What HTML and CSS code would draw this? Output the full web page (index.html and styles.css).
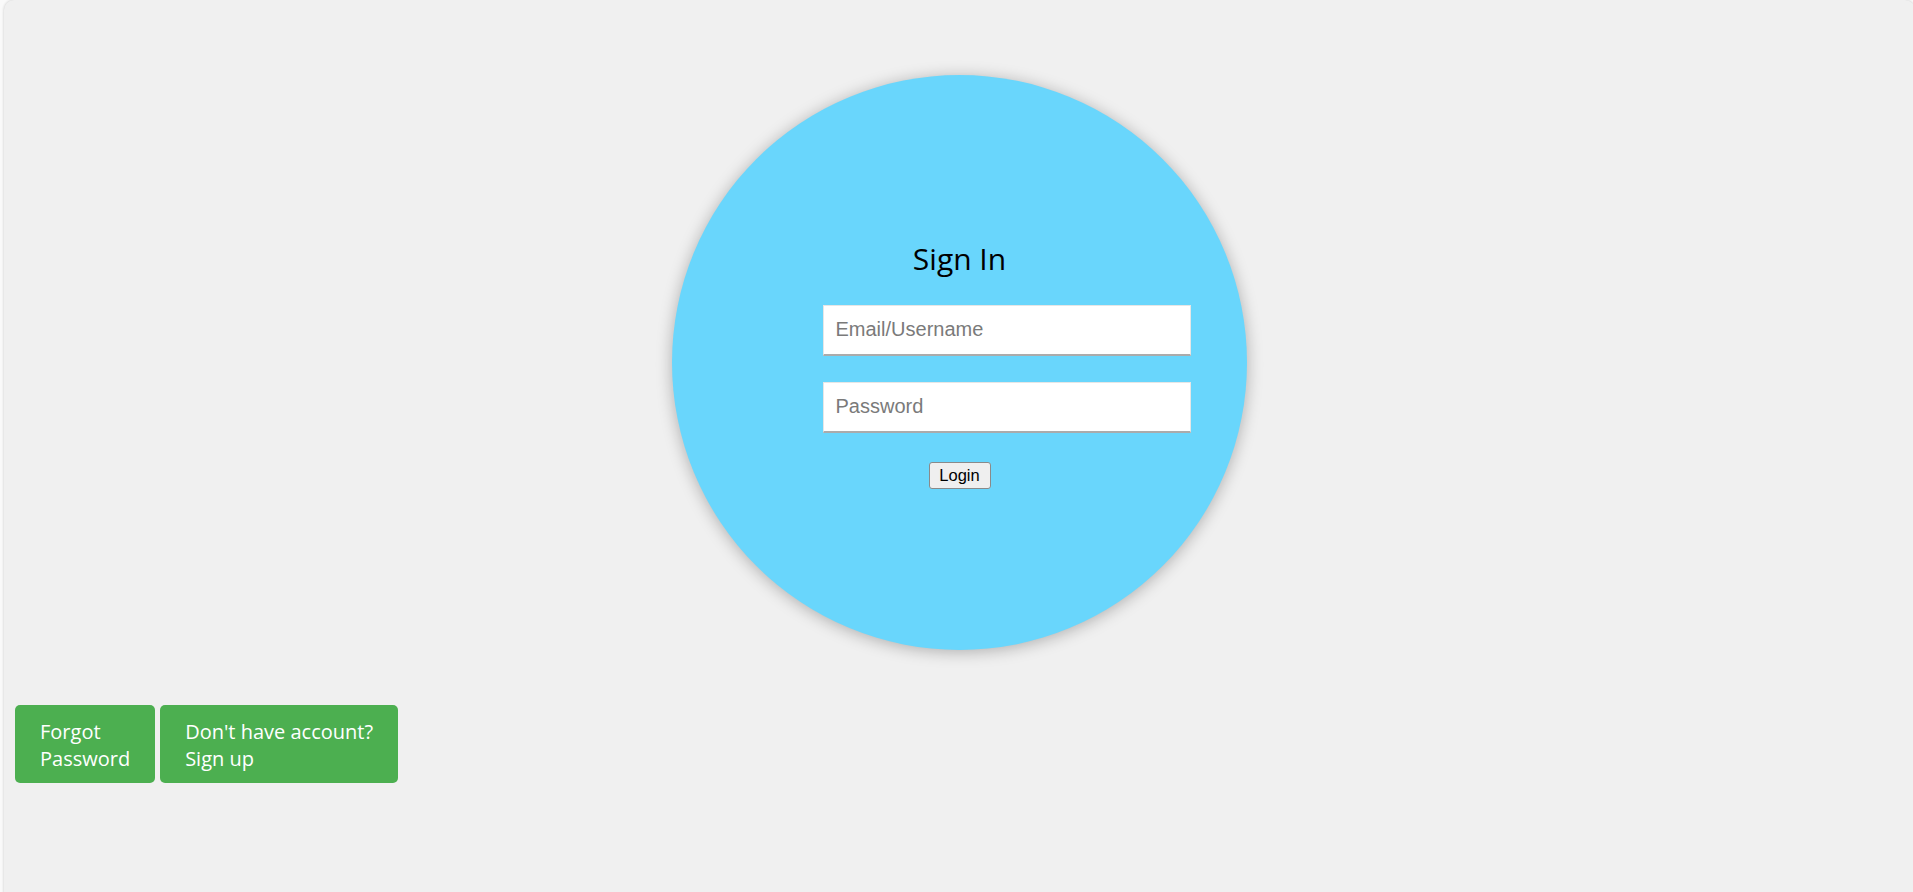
FILE: index.html
```html
<!DOCTYPE html>
<html lang="en">
<head>
<meta charset="utf-8">
<title>Sign In</title>
<link rel="stylesheet" href="styles.css">
</head>
<body>
<div class="page">
  <div class="circle">
    <h1 class="title">Sign In</h1>
    <input class="field" type="text" placeholder="Email/Username">
    <input class="field field-last" type="password" placeholder="Password">
    <button class="login" type="button">Login</button>
  </div>
  <div class="actions">
    <a class="green-btn" href="#">Forgot<br>Password</a>
    <a class="green-btn" href="#">Don't have account?<br>Sign up</a>
  </div>
</div>
</body>
</html>
```

FILE: styles.css
```css
html, body {
  margin: 0;
  padding: 0;
}
body {
  background: #fafafa;
  overflow: hidden;
  font-family: "Open Sans", "Noto Sans", sans-serif;
}
.page {
  margin-left: 4px;
  width: 1911px;
  min-height: 920px;
  background: #f0f0f0;
  border-radius: 10px;
  box-shadow: 0 0 3px rgba(0, 0, 0, 0.2);
  padding-top: 75px;
  box-sizing: border-box;
}
.circle {
  width: 575px;
  height: 575px;
  margin: 0 auto;
  border-radius: 50%;
  background: #69d6fc;
  box-shadow: 0 2px 16px rgba(0, 0, 0, 0.28);
  display: flex;
  flex-direction: column;
  align-items: center;
  justify-content: center;
}
.title {
  margin: 0 0 25px;
  font-family: "Open Sans", sans-serif;
  font-weight: 500;
  font-size: 30px;
  line-height: 43px;
  color: #000;
}
.field {
  box-sizing: border-box;
  width: 368px;
  height: 51px;
  margin: 0 0 26px 94px;
  padding: 0 12px;
  border: 1px solid #e6e6e6;
  border-bottom: 2px solid #ababab;
  background: #fff;
  font-family: "Liberation Sans", Arial, sans-serif;
  font-size: 20px;
  color: #333;
  outline: none;
}
.field::placeholder {
  color: #7a7a7a;
}
.field-last {
  margin-bottom: 29px;
}
.login {
  box-sizing: border-box;
  width: 62px;
  height: 27px;
  padding: 0;
  border: 1px solid #8a8a8a;
  border-radius: 3px;
  background: #efefef;
  font-family: "Liberation Sans", Arial, sans-serif;
  font-size: 16.5px;
  color: #000;
}
.actions {
  display: flex;
  gap: 5px;
  margin-top: 55px;
  padding-left: 11px;
}
.green-btn {
  display: block;
  background: #4caf50;
  color: #fff;
  text-decoration: none;
  font-family: "Open Sans", sans-serif;
  font-size: 20px;
  line-height: 27px;
  padding: 13px 25px 11px;
  border-radius: 5px;
}
```
